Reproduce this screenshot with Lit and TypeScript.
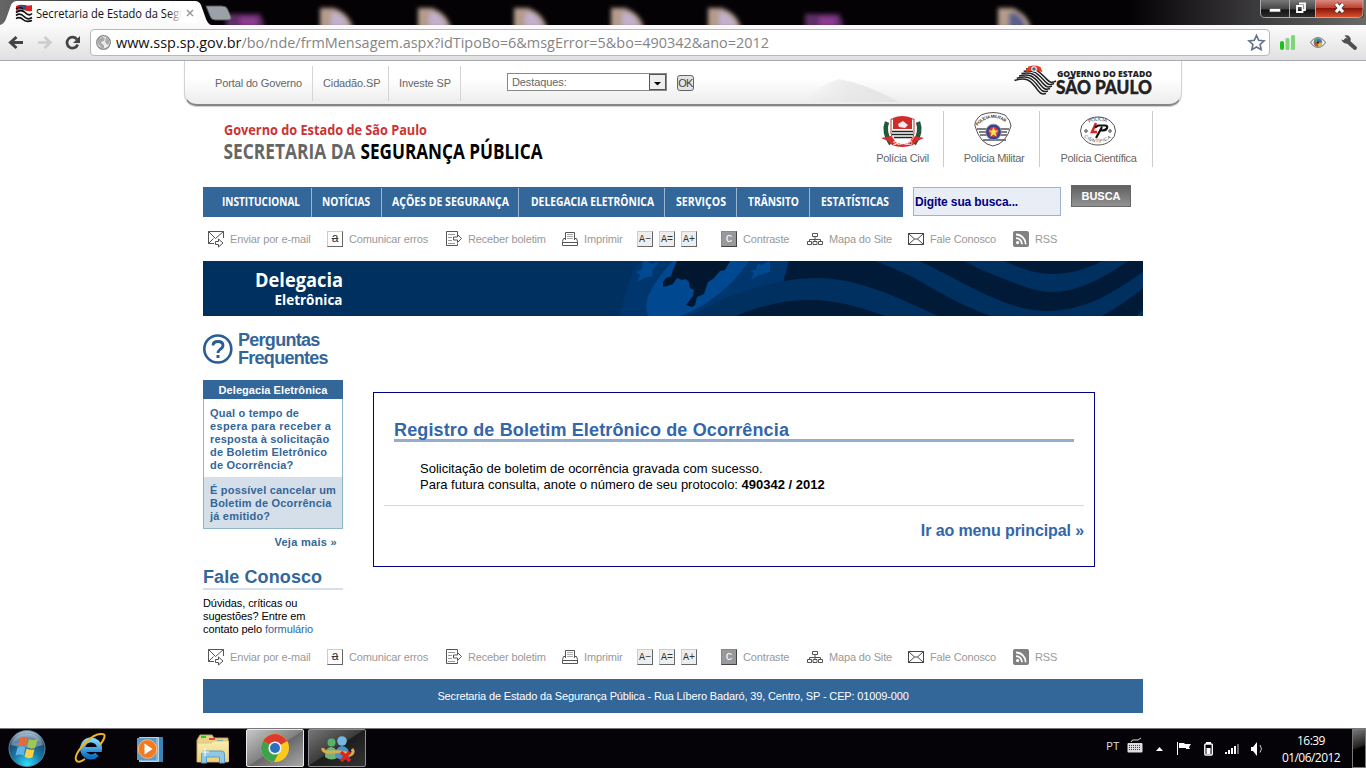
import { LitElement, html, svg, css } from "lit";
import { customElement, property } from "lit/decorators.js";

/** Inline drawing whose viewBox starts at x, y. */
const art = (x: number, y: number, w: number, h: number, body: unknown) =>
  html`<svg width=${w} height=${h} viewBox="${x} ${y} ${w} ${h}">${body}</svg>`;

/** Condensed label set to an exact width. */
const label = (t: string, x: number, y: number, w: number, size: number, fill: string, weight = 700) =>
  svg`<text x=${x} y=${y} textLength=${w} lengthAdjust="spacingAndGlyphs" font-family="'Open Sans','Noto Sans',sans-serif" font-size=${size} font-weight=${weight} fill=${fill}>${t}</text>`;

@customElement("tool-links")
export class ToolLinks extends LitElement {
  static styles = css`
    :host { display: block; height: 18px; padding-left: 5px; }
    .row { display: flex; height: 18px; font: 11px/17px "Liberation Sans", Arial, sans-serif; color: #999; white-space: nowrap; letter-spacing: -0.15px; }
    .item { display: flex; gap: 6px; flex: none; }
    .w119 { width: 119px; } .w116 { width: 116px; } .w75 { width: 75px; } .w22 { width: 22px; }
    .w40 { width: 40px; } .w86 { width: 86px; } .w101 { width: 101px; } .w105 { width: 105px; }
    svg { display: block; flex: none; overflow: visible; }
    .box { box-sizing: border-box; width: 16px; height: 16px; border: 1px solid #ccc; border-right-color: #666; border-bottom-color: #666; background: #eee; color: #333; font: 10px/15px "Liberation Mono", monospace; letter-spacing: 0; text-align: center; }
    .dark { background: #999; border-color: #888; border-right-color: #444; border-bottom-color: #444; color: #fff; font-size: 11px; line-height: 14px; }
    .err { background: #fff; font: 12px/13px "Liberation Sans", sans-serif; text-decoration: line-through; color: #333; }
  `;
  render() {
    return html`<div class="row">
      <span class="item w119">${art(0, 0, 16, 17, svg`<g fill="none" stroke="#555"><path d="M6 12.500H.5V.5h15V7M.5.5l7 7 8-7M.5 12.500l5-5"/><path d="M7.500 10.500h3V8l4.500 4-4.500 4v-2.500h-3z" fill="#fff"/></g>`)}<span>Enviar por e-mail</span></span>
      <span class="item w119"><span class="box err">a</span><span>Comunicar erros</span></span>
      <span class="item w116">${art(0, 0, 16, 16, svg`<g fill="none" stroke="#555"><path d="M11.500 3.500V.5H.5v14h11v-2"/><path d="M2 3.500h7M2 6.500h4M2 9.500h4M2 12.500h7" stroke="#999"/><path d="M7.500 6h4V3.500l4 4-4 4V9h-4z" fill="#fff"/></g>`)}<span>Receber boletim</span></span>
      <span class="item w75">${art(0, 0, 16, 16, svg`<g fill="none" stroke="#555"><path d="M3.500 9V1.500h9V9"/><path d="M5 3.500h6M5 5.500h6M5 7.500h6" stroke="#aaa"/><path d="M3 7.500H1.500l-1 3v4h15v-4l-1-3H13M.5 11.500h15"/></g>`)}<span>Imprimir</span></span>
      <span class="item w22"><span class="box">A−</span></span>
      <span class="item w22"><span class="box">A=</span></span>
      <span class="item w40"><span class="box">A+</span></span>
      <span class="item w86"><span class="box dark">C</span><span>Contraste</span></span>
      <span class="item w101">${art(0, 0, 16, 16, svg`<path d="M5.500 2.500h5v3h-5zM8 6v2.500M2.500 11V8.500h11V11M8 8.500V11M.5 10.500h4v3h-4zM6 10.500h4v3H6zM11.500 10.500h4v3h-4z" fill="none" stroke="#555"/>`)}<span>Mapa do Site</span></span>
      <span class="item w105">${art(0, 0, 16, 16, svg`<path d="M.5 2.500h15v11H.5zl6 5.500h3l6-5.500M.5 13.500l6-5.500M15.500 13.500l-6-5.500" fill="none" stroke="#444"/>`)}<span>Fale Conosco</span></span>
      <span class="item">${art(0, 0, 16, 16, svg`<rect width="16" height="16" rx="2" fill="#808080"/><circle cx="4.600" cy="11.600" r="1.600" fill="#fff"/><path d="M3 7.200a6 6 0 0 1 6 6M3 3.500a9.700 9.700 0 0 1 9.700 9.700" stroke="#fff" stroke-width="1.800" fill="none"/>`)}<span>RSS</span></span>
    </div>`;
  }
}

@customElement("browser-chrome")
export class BrowserChrome extends LitElement {
  static styles = css`
    :host { display: block; height: 61px; }
    svg { display: block; flex: none; }
    .bar { box-sizing: border-box; height: 36px; display: flex; align-items: flex-start; background: linear-gradient(#fbfbfb, #e0e0e0); border-bottom: 1px solid #a8abb3; }
    .nav { width: 90px; }
    .url { box-sizing: border-box; width: 1180px; height: 27px; margin-top: 4px; border: 1px solid #b6b8bc; border-radius: 4px; background: #fff; display: flex; justify-content: space-between; overflow: hidden; }
  `;
  render() {
    const blobs: [number, boolean][] = [[236, true], [330, false], [428, false], [524, false], [621, false], [718, false], [815, true], [1008, false]];
    return html`
      ${art(0, 0, 1366, 25, svg`
        <defs>
          <linearGradient id="tl"><stop offset="0" stop-color="#666"/><stop offset="1" stop-color="#050206"/></linearGradient>
          <linearGradient id="tr"><stop offset="0" stop-color="#050206"/><stop offset="1" stop-color="#6a6a6a"/></linearGradient>
          <linearGradient id="gl" x2="0" y2="1"><stop offset="0" stop-color="#777"/><stop offset=".5" stop-color="#444"/><stop offset=".55" stop-color="#111"/><stop offset="1" stop-color="#333"/></linearGradient>
          <linearGradient id="rd" x2="0" y2="1"><stop offset="0" stop-color="#d98a80"/><stop offset=".45" stop-color="#bb4434"/><stop offset=".5" stop-color="#8e1508"/><stop offset="1" stop-color="#d4512f"/></linearGradient>
          <linearGradient id="tb" x2="0" y2="1"><stop offset="0" stop-color="#fff"/><stop offset="1" stop-color="#fafafa"/></linearGradient>
          <linearGradient id="fade"><stop offset="0" stop-color="#fff" stop-opacity="0"/><stop offset="1" stop-color="#fff"/></linearGradient>
          <filter id="bl" x="-30%" y="-50%" width="160%" height="200%"><feGaussianBlur stdDeviation="2"/></filter>
        </defs>
        <rect width="1366" height="25" fill="#050206"/>
        <rect width="210" height="25" fill="url(#tl)"/>
        <rect x="1130" width="236" height="25" fill="url(#tr)"/>
        ${blobs.map(([x, purple], i) => svg`<g filter="url(#bl)">${purple
          ? svg`<path d="M${x - 10} 14h34q4 6 4 14h-38z" fill="#5e2d66"/><rect x=${x + 4} y="17" width="17" height="10" fill="#8b3a90"/>`
          : svg`<path d="M${x - 10} 8h14q15 5 19 20h-33z" fill="#b39c8c"/><path d="M${x + 1} 13h7q8 5 10 15h-17z" fill=${i === 7 ? "#5a608c" : "#c3b0cc"}/>`}</g>`)}
        <path d="M206 6h16q5 0 6 4l3 7q1 3-2 3h-14q-4 0-5-4z" fill="#9ba1a9" stroke="#555"/>
        <path d="M0 25q4-1 6-6l5-14q2-4 6-4h178q4 0 6 4l5 14q2 5 5 6z" fill="url(#tb)"/>
        <path d="M16 6q4-2 8-1t8 0v6q-4 1-8-1t-8 1z" fill="#d9212b"/><path d="M20 5h6v4h-6z" fill="#35507f"/><path d="M16 9q4-3 7 0" stroke="#111" stroke-width="1.500" fill="none"/>
        <path d="M16 12.500q5-4 9 0t7 1M16 15.500q4-3 8 1t8 1M16 18.500q4-2 7 1t9 1" stroke="#111" stroke-width="1.700" fill="none"/>
        <text x="36" y="17.500" textLength="150" lengthAdjust="spacingAndGlyphs" font-family="'Open Sans','Noto Sans',sans-serif" font-size="12" fill="#111">Secretaria de Estado da Segu</text>
        <rect x="168" y="3" width="14" height="20" fill="url(#fade)"/><rect x="182" y="3" width="15" height="20" fill="#fff"/>
        <path d="M187 10l6 6M193 10l-6 6" stroke="#999" stroke-width="1.500"/>
        <path d="M1260 0v14q0 4 4 4h96q4 0 4-4V0z" fill="url(#gl)"/><path d="M1316 0v17h44q3 0 3-3V0z" fill="url(#rd)"/>
        <path d="M1260.500 0v13q0 4.500 4 4.500h94q4.500 0 4.500-4.500V0M1289.500 0v17M1315.500 0v17" fill="none" stroke="#aaa"/>
        <rect x="1269.500" y="8.500" width="11" height="3.500" fill="#fff" stroke="#444" stroke-width=".7"/>
        <path d="M1299 3.500h6v6.500h-2M1297 6h5.500v6H1297z" fill="none" stroke="#fff" stroke-width="1.800"/>
        <path d="M1336 4l7 8M1343 4l-7 8" stroke="#333" stroke-width="4.600"/><path d="M1336 4l7 8M1343 4l-7 8" stroke="#fff" stroke-width="3"/>`)}
      <div class="bar">
        <div class="nav">${art(0, 25, 90, 35, svg`
          <path d="M23 42.500H12M16.500 37l-6 5.500 6 5.500" fill="none" stroke="#444" stroke-width="3"/>
          <path d="M38 42.500h11M44.500 37l6 5.500-6 5.500" fill="none" stroke="#ccc" stroke-width="2.600"/>
          <path d="M77 39.500a5.500 5.500 0 1 0 .7 5" fill="none" stroke="#444" stroke-width="2.700"/><path d="M80 36v7h-7z" fill="#444"/>`)}</div>
        <div class="url">
          ${art(91, 30, 700, 25, svg`
            <circle cx="103.500" cy="42.500" r="6.800" fill="#eee" stroke="#888" stroke-width="1.300"/>
            <path d="M98 39l4-2 3 1-1 3-3 1 1 2 2 1v3l-2 1-2-3-2-2zM106 37l3 3v4l-2 1-2-3z" fill="#aaa"/>
            <text x="116" y="48" font-family="'Open Sans','Noto Sans',sans-serif" font-size="15" textLength="653" lengthAdjust="spacingAndGlyphs" fill="#111">www.ssp.sp.gov.br<tspan fill="#858585">/bo/nde/frmMensagem.aspx?idTipoBo=6&amp;msgError=5&amp;bo=490342&amp;ano=2012</tspan></text>`)}
          ${art(1241, 30, 28, 25, svg`<path d="M1256.500 35.500l2.200 4.800 5.300.6-3.900 3.600 1 5.200-4.600-2.600-4.600 2.600 1-5.200-3.900-3.600 5.300-.6z" fill="#fff" stroke="#66728d" stroke-width="1.700"/>`)}
        </div>
        ${art(1270, 25, 96, 35, svg`
          <rect x="1280" y="41" width="4" height="9" rx="2" fill="#19c419"/><rect x="1285.500" y="38" width="4" height="12" rx="1.500" fill="#7fd67a"/><rect x="1291" y="35" width="4" height="15" rx="1.500" fill="#7fd67a"/>
          <path d="M1310.500 42.500q7.500-10 15 0-7.500 10-15 0z" fill="#fff" stroke="#888" stroke-width="1.200"/>
          <circle cx="1318" cy="42.500" r="4.300" fill="#3b78ba"/><path d="M1318 42.500v-4.300a4.300 4.300 0 0 0-4.300 4.300z" fill="#4a9e5b"/><path d="M1318 42.500v4.300a4.300 4.300 0 0 0 4.300-4.300z" fill="#e8b62c"/><path d="M1318 42.500v4.300a4.300 4.300 0 0 1-4.300-4.300z" fill="#c9513f"/><circle cx="1318" cy="42.500" r="1.200" fill="#333"/>
          <path d="M1346 40l9 8" stroke="#505050" stroke-width="4" stroke-linecap="round"/><path d="M1344.500 35.500l3 3-1 2.500-5-1.500a5 5 0 0 0 8 3q2.500-3 0-6-2-2-5-1z" fill="#505050"/>`)}
      </div>`;
  }
}

@customElement("task-bar")
export class TaskBar extends LitElement {
  static styles = css`
    :host { display: block; height: 40px; }
    .bar { box-sizing: border-box; height: 40px; display: flex; justify-content: space-between; background: #050307; border-top: 1px solid #77747a; }
    svg { display: block; flex: none; }
    .tray { display: flex; font: 12px/17px "Open Sans", "Noto Sans", sans-serif; color: #fff; }
    .lang { width: 21px; padding-top: 8px; font-size: 11.5px; color: #ddd; }
    .clock { width: 82px; padding-top: 3px; text-align: center; letter-spacing: -0.55px; }
    .desk { box-sizing: border-box; width: 14px; height: 39px; border: 1px solid #777; background: linear-gradient(160deg, #777, #222 45%, #000 50%); }
  `;
  render() {
    return html`<div class="bar">
      ${art(0, 729, 370, 39, svg`
        <defs>
          <radialGradient id="orb" cx=".5" cy=".95" r=".9"><stop offset="0" stop-color="#2fe1ff"/><stop offset=".45" stop-color="#1779a8"/><stop offset=".8" stop-color="#1d4a6e"/><stop offset="1" stop-color="#9fb9cb"/></radialGradient>
          <linearGradient id="c1" x2="1" y2="1"><stop offset="0" stop-color="#c8c8c8"/><stop offset=".5" stop-color="#828282"/><stop offset=".52" stop-color="#686868"/><stop offset="1" stop-color="#aaa"/></linearGradient>
          <linearGradient id="c2" x2="1" y2="1"><stop offset="0" stop-color="#777"/><stop offset=".48" stop-color="#3c3c3c"/><stop offset=".5" stop-color="#1d1d1d"/><stop offset="1" stop-color="#333"/></linearGradient>
          <linearGradient id="ie" x2="0" y2="1"><stop offset="0" stop-color="#7fd6fb"/><stop offset="1" stop-color="#0d6fc4"/></linearGradient>
          <linearGradient id="fo" x2="0" y2="1"><stop offset="0" stop-color="#fbeeb0"/><stop offset="1" stop-color="#ecd07a"/></linearGradient>
        </defs>
        <circle cx="27" cy="748.500" r="18" fill="url(#orb)" stroke="#5c7f97"/>
        <path d="M11 745a16.500 15 0 0 1 32 0q-15 5-32 0z" fill="#fff" opacity=".32"/>
        <path d="M20 738q4-2 8 0l-2 8q-4-2-8 0z" fill="#e8683a"/><path d="M29 739q4 2 9 0l-3 9q-4 2-8-1z" fill="#9cc853"/><path d="M17.500 747.500q4-2 8 0l-2 8q-4-2-8 0z" fill="#63b4e6"/><path d="M26.500 748.500q4 2 8 1l-2 8q-5 2-8-1z" fill="#fbcf46"/>
        <path d="M97 754.500a8.500 8.500 0 1 1 2.500-5H84" fill="none" stroke="url(#ie)" stroke-width="5"/>
        <path d="M100 745q8-11 2-11-7-1-17 9-11 12-9 17 2 4 9-1" fill="none" stroke="#eeb52c" stroke-width="2"/>
        <path d="M142 737h21v25h-21z" fill="#3c82b8"/><path d="M139.500 737.500h19v24h-19z" fill="#84b7da" stroke="#b7d7ec"/><path d="M137 738h19v22h-19z" fill="#5b9bc8"/>
        <circle cx="147.500" cy="749" r="9.300" fill="#f07c22" stroke="#f9b680"/><path d="M144.500 743.500v11l8-5.500z" fill="#fff"/>
        <path d="M200 735h12l2 3h14v24h-31v-22z" fill="#e9d189" stroke="#b9a160"/><path d="M201 736h5v2h-5z" fill="#2c2"/><path d="M209 738h6v2h-6z" fill="#d44"/><path d="M217 740h6v2h-6z" fill="#28c"/>
        <path d="M197.500 743h14l2-2h15v20.500h-31z" fill="url(#fo)" stroke="#dcc680"/>
        <path d="M201.500 763v-9q0-3 3-3h17q3 0 3 3v9h-5v-6h-13v6z" fill="#8ec8e6" stroke="#5c9cc4"/><path d="M205 748v8M201 752h8" stroke="#fff"/>
        <rect x="246.500" y="729.500" width="57" height="37" rx="1.500" fill="url(#c1)" stroke="#e8e8e8"/>
        <circle cx="275" cy="748" r="14" fill="#fcca1c"/><path d="M275 748L262.900 741A14 14 0 0 1 287.100 741z" fill="#db3a2f"/><path d="M275 748l-12.100-7a14 14 0 0 0 11 21l6-11z" fill="#3da24a"/>
        <circle cx="275" cy="748" r="6.600" fill="#f4f4f4"/><circle cx="275" cy="748" r="5" fill="#2c6fbc"/>
        <rect x="308.500" y="729.500" width="57" height="37" rx="1.500" fill="url(#c2)" stroke="#909090"/>
        <circle cx="331.500" cy="742.500" r="4" fill="#58b36a"/><path d="M325 757q0-10 6-10t7 10q-6 5-13 0z" fill="#72b676"/>
        <circle cx="342" cy="741" r="4.800" fill="#76b9e0"/><path d="M335 757q0-11 7-11t8 11q-7 5-15 0z" fill="#4a93c8"/>
        <path d="M323 748q-1 5 10 4t17 3q5-2 2-6" fill="none" stroke="#dcaa55" stroke-width="3"/>
        <path d="M341 752l9 9M350 752l-9 9" stroke="#e2231a" stroke-width="3.600"/>`)}
      <div class="tray">
        <span class="lang">PT</span>
        ${art(1127, 729, 143, 39, svg`
          <path d="M1131 742q1-3 4-2t6-2" fill="none" stroke="#ddd"/><rect x="1127.500" y="743" width="15" height="9.500" rx="1" fill="#ddd"/><path d="M1129 745.500h12M1129 747.500h12M1129 749.500h12" stroke="#444" stroke-dasharray="1 1"/>
          <path d="M1156 751l3.500-4 3.500 4z" fill="#fff"/>
          <path d="M1177.500 742v13" stroke="#fff"/><path d="M1179 743h5.500v1h6.500l-2 3 1 2h-4v-1h-7z" fill="#fff"/>
          <rect x="1204.800" y="744" width="7.500" height="11" rx="1" fill="none" stroke="#fff" stroke-width="1.400"/><path d="M1206.500 748h4v6h-4zM1206 742h5v2h-5z" fill="#fff"/>
          <path d="M1225 752h2v2h-2zM1228 750h2v4h-2zM1231 748h2v6h-2zM1234 746h2v8h-2z" fill="#fff"/><path d="M1237 744h2v10h-2z" fill="#666"/>
          <path d="M1251 747h2l4-5v14l-4-5h-2z" fill="#fff"/><path d="M1260 745q3 4 0 7.500" stroke="#ccc" fill="none"/>`)}
        <div class="clock">16:39<br />01/06/2012</div>
        <div class="desk"></div>
      </div>
    </div>`;
  }
}

@customElement("main-menu")
export class MainMenu extends LitElement {
  @property({ attribute: false }) entries: [string, number, number, number][] = [
    ["INSTITUCIONAL", 203, 222, 78], ["NOTÍCIAS", 312, 322, 48], ["AÇÕES DE SEGURANÇA", 382, 392, 117],
    ["DELEGACIA ELETRÔNICA", 519, 531, 123], ["SERVIÇOS", 665, 676, 50], ["TRÂNSITO", 737, 748, 51], ["ESTATÍSTICAS", 810, 821, 68],
  ];
  static styles = css`
    :host { display: block; width: 700px; height: 30px; background: #336699; }
    .menu { display: flex; }
    svg { display: block; flex: none; overflow: visible; }
  `;
  render() {
    return html`<nav class="menu">${this.entries.map(([t, x, tx, tw], i) => {
      const next = this.entries[i + 1]?.[1] ?? 903;
      return art(x, 187, next - x, 30, svg`${label(t, tx, 206, tw, 12, "#fff")}${next < 903 ? svg`<path d="M${next - 0.5} 188v29" stroke="#9bb6d0"/>` : ""}`);
    })}</nav>`;
  }
}

@customElement("app-root")
export class AppRoot extends LitElement {
  static styles = css`
    :host { display: block; width: 1366px; height: 768px; overflow: hidden; background: #fff; font: 11px/13px "Liberation Sans", Arial, sans-serif; color: #000; }
    .shell { height: 768px; display: grid; grid-template-rows: 61px 667px 40px; }
    svg { display: block; flex: none; overflow: visible; }
    .top { box-sizing: border-box; width: 998px; height: 45px; margin-left: 184px; padding: 5px 28px 0 20px; display: flex; border: 1px solid #d2d2d2; border-top: 0; border-bottom: 2px solid #858585; border-radius: 0 0 13px 13px; background: linear-gradient(#fff 40%, #ececec); box-shadow: 0 1px 1px #ccc; color: #666; }
    .link { box-sizing: border-box; height: 35px; padding: 11px 0 0 10px; border-right: 1px solid #d5d5d5; white-space: nowrap; letter-spacing: -0.13px; }
    .l1 { width: 108px; } .l2 { width: 76px; } .l3 { width: 72px; }
    .select { box-sizing: border-box; width: 160px; height: 18px; margin: 7px 10px 0 46px; border: 1px solid #888; background: #fff; display: flex; justify-content: space-between; padding-left: 4px; line-height: 17px; letter-spacing: -0.1px; }
    .ok { box-sizing: border-box; width: 17px; height: 16px; margin-top: 9px; border: 1px solid #666; border-radius: 3px; background: #e3e3e3; text-align: center; line-height: 15px; letter-spacing: -0.8px; color: #444; }
    .swoosh { margin: 11px 0 0 105px; }
    .sp { margin-left: auto; margin-top: -3px; }
    .page { width: 950px; margin-left: 203px; }
    .brand { height: 81px; display: flex; justify-content: space-between; }
    .police { display: flex; padding-top: 5px; height: 56px; color: #666; text-align: center; letter-spacing: -0.32px; }
    .corp { box-sizing: border-box; border-right: 1px solid #ccc; height: 56px; display: flex; flex-direction: column; align-items: center; gap: 1px; }
    .p1 { width: 82px; } .p2 { width: 96px; padding-left: 5px; } .p3 { width: 113px; padding-left: 5px; }
    .navrow { display: flex; height: 44px; gap: 10px; }
    .search { box-sizing: border-box; width: 148px; height: 29px; border: 1px solid #99b3d0; background: #e9edf6; color: #000080; font-weight: 700; font-size: 12px; line-height: 28px; padding-left: 1px; letter-spacing: -0.12px; }
    .go { box-sizing: border-box; width: 60px; height: 22px; margin-top: -2px; border: 1px solid #666; background: linear-gradient(#606060, #929292); color: #fff; font-weight: 700; line-height: 21px; text-align: center; }
    .banner { margin-top: 12px; height: 55px; }
    .wave { overflow: hidden; }
    .cols { display: flex; gap: 30px; height: 333px; }
    .side { width: 140px; color: #336699; }
    .faq { display: flex; gap: 5px; height: 49px; padding-top: 15px; font: 700 18px/18px "Liberation Sans", Arial, sans-serif; letter-spacing: -0.72px; white-space: nowrap; }
    .q { margin-top: 2px; }
    .head { height: 19px; background: #336699; color: #fff; font-weight: 700; text-align: center; line-height: 20px; letter-spacing: 0.06px; }
    .box { box-sizing: border-box; height: 130px; border: 1px solid #8fb5c9; border-top: 0; font-weight: 700; white-space: nowrap; letter-spacing: 0.2px; }
    .q1 { height: 70px; padding: 8px 6px 0; } .q2 { height: 44px; padding: 7px 6px 0; background: #d5dfea; }
    .wide { letter-spacing: 0.36px; }
    .more { padding: 7px 6px 0 0; text-align: right; font-weight: 700; letter-spacing: 0.3px; }
    .contact { height: 20px; margin-top: 19px; border-bottom: 2px solid #d5dfea; font: 700 18px/18px "Liberation Sans", Arial, sans-serif; letter-spacing: 0.1px; }
    .ask { padding-top: 7px; color: #000; white-space: nowrap; letter-spacing: -0.08px; } .form { color: #336699; }
    .panel { box-sizing: border-box; width: 722px; height: 175px; margin-top: 76px; border: 1px solid #000080; padding: 26px 10px 0; }
    .title { margin: 0 10px; height: 20px; border-bottom: 3px solid #93adcf; font: 700 18px/22px "Liberation Sans", Arial, sans-serif; letter-spacing: 0.135px; color: #3366aa; }
    .msg { height: 44px; padding: 19px 0 0 36px; font-size: 13px; line-height: 16px; border-bottom: 1px solid #d8d8d8; }
    .ln { white-space: nowrap; }
    .back { padding-top: 16px; text-align: right; font: 700 16px/18px "Liberation Sans", Arial, sans-serif; letter-spacing: -0.1px; color: #3366aa; }
    .foot { width: 940px; height: 34px; margin-top: 12px; background: #336699; color: #fff; text-align: center; line-height: 34px; letter-spacing: -0.15px; }
  `;
  render() {
    return html`<div class="shell">
      <browser-chrome></browser-chrome>
      <main>
        <header class="top">
          <span class="link l1">Portal do Governo</span><span class="link l2">Cidadão.SP</span><span class="link l3">Investe SP</span>
          <div class="select"><span>Destaques:</span>${art(0, 0, 17, 16, svg`<rect x=".5" y=".5" width="16" height="15" fill="#eee" stroke="#555"/><path d="M5 8h7l-3.500 3.500z"/>`)}</div>
          <div class="ok">OK</div>
          <div class="swoosh">${art(800, 77, 100, 25, svg`<defs><linearGradient id="sw"><stop offset="0" stop-color="#e4e4e4" stop-opacity="0"/><stop offset=".45" stop-color="#e4e4e4" stop-opacity=".7"/><stop offset="1" stop-color="#e4e4e4"/></linearGradient></defs><path d="M808 102q10-16 32-23 28 5 60 23z" fill="url(#sw)"/>`)}</div>
          <div class="sp">${art(1012, 63, 141, 34, svg`
            ${[0, 1, 2, 3, 4, 5].map((i) => svg`<path d="M${1014.5 + i * 2.3} ${80.5 - i * 2.3}C${1026 + i * 2} ${77 - i * 1.8} ${1030 + i * 1.8} ${80 - i * 1.7} ${1035 + i * 1.8} ${86.5 - i * 2}S${1041 + i * 1.8} ${95 - i * 2.2} ${1046 + i * 2} ${93.5 - i * 2.5}" fill="none" stroke="#222" stroke-width="1.500"/>`)}
            <path d="M1028.500 66.500q6-2 12 0.500l2 5q-8-2-17-.5z" fill="#e33b22"/><circle cx="1034" cy="69" r="2.800" fill="#fff"/><circle cx="1034" cy="69" r="1.800" fill="#3465a8"/>
            ${label("GOVERNO DO ESTADO", 1057, 77, 95, 9, "#222", 800)}
            <text x="1056" y="93.500" textLength="96" lengthAdjust="spacingAndGlyphs" font-family="Lato,sans-serif" font-weight="900" font-size="18" fill="#222" stroke="#222" stroke-width=".4">SÃO PAULO</text>`)}</div>
        </header>
        <div class="page">
          <div class="brand">
            ${art(203, 106, 350, 60, svg`${label("Governo do Estado de São Paulo", 224, 135, 203, 13.5, "#cc3333")}
              ${label("SECRETARIA DA", 223.5, 159, 132, 21, "#666")}${label("SEGURANÇA PÚBLICA", 360.5, 159, 182, 21, "#000")}`)}
            <div class="police">
              <div class="corp p1">${art(882, 111, 44, 40, svg`
                <path d="M888 122q-4 10 4 22M919 122q4 10-4 22" stroke="#1f5a3b" stroke-width="4.500" fill="none"/><path d="M892 119h23v14q-1 10-11.500 13Q893 143 892 133z" fill="#fff" stroke="#b33"/><path d="M894 118q9-4 19 0v11h-19z" fill="#cf2c2c"/><path d="M899 124l5-3 5 4-3 3-6-1z" fill="#f5e9e9"/><path d="M893 131.500h21M893 134.500h21M895 137.500h18" stroke="#222" stroke-width="1.600"/>
                <path d="M882 138l10-2 4 6q8 4 16 0l4-6 9 2-7 3-4 4q-11 4-21 0l-4-4z" fill="#d82b2b"/><text x="894" y="144.500" font-size="5" textLength="19" font-family="Liberation Sans" fill="#fff">SAO PAULO</text>`)}<span>Polícia Civil</span></div>
              <div class="corp p2">${art(975, 110, 40, 40, svg`
                <path d="M976 125q-1-5 6-11 12-5 24 0 6 6 6 11-5 18-18 20-13-2-18-20z" fill="#fff" stroke="#555"/><path d="M978 128h32M980 131h28M981 134h27M984 139h23" stroke="#555" stroke-width="1.600"/>
                <path id="pm" d="M978.500 125q15-17 33 1" fill="none"/><text font-size="4.300" font-weight="700" font-family="Liberation Sans" fill="#333"><textPath href="#pm">POLÍCIA MILITAR</textPath></text>
                <circle cx="994.500" cy="131" r="7.800" fill="#34409d" stroke="#999"/><circle cx="994.500" cy="131" r="5" fill="#d43b33"/><path d="M994.500 126l1.500 3.500h3.500l-3 2.400 1.200 4-3.200-2.400-3.200 2.400 1.200-4-3-2.400h3.500z" fill="#f6dd5b"/>`)}<span>Polícia Militar</span></div>
              <div class="corp p3">${art(1080, 111, 40, 40, svg`
                <ellipse cx="1099" cy="131" rx="17.500" ry="14" fill="#fff" stroke="#555"/>
                <path id="pc" d="M1086 126q13-11 26 0" fill="none"/><path id="pd" d="M1085 137q14 11 28 0" fill="none"/><text font-size="5" font-family="Liberation Sans" fill="#333"><textPath href="#pc" startOffset="5">POLÍCIA</textPath></text><text font-size="4.500" font-family="Liberation Sans" fill="#333"><textPath href="#pd" textLength="29">CIENTÍFICA</textPath></text>
                <path d="M1097 123l-4 9h5" fill="none" stroke="#dc2222" stroke-width="2.500"/><path d="M1096 127.500l3-2h7q3 0 2 2.500t-5 2.500h-2M1103 127l-6 11" fill="none" stroke="#111" stroke-width="2.200"/><path d="M1085 131h4M1087 129v4M1109 131h4M1111 129v4" stroke="#777" stroke-width="1.500"/>`)}<span>Polícia Científica</span></div>
            </div>
          </div>
          <div class="navrow"><main-menu></main-menu><div class="search">Digite sua busca...</div><div class="go">BUSCA</div></div>
          <tool-links></tool-links>
          <div class="banner"><svg class="wave" width="940" height="55" viewBox="203 261 940 55">
            <rect x="203" y="261" width="940" height="55" fill="#003060"/>
            <path d="M619.500 316Q626 290 633 271l8-10h148l-5 20q-50 9-93 35z" fill="#00366e"/>
            <path d="M648 316q-4-9 1-22 9-18 24-33h76q-10 14-19 23-20 20-49 32z" fill="#004890"/>
            <path d="M643 261l-1 8-6 3 4 3-3 7 7-4 9-2-1-5 7-9-8 2-3-3zM757 266l-1 3-6 2 4 2-3 7 8-5 11-3V261l-9 4-3-2z" fill="#004890"/>
            <path d="M677 261l-4 9-2 6-5 2-3 4v5l4-1 6-2 4-6 5 2 4-1 3 3 1 6 4 2-1 6-7 9 6 2 3-2 2-8 7-3 4-12 5-3 7-8 5-1 5-9z" fill="#00172f"/>
            <path d="M789 261h86c19 7 35 14 48 22 24 14 47 26 68 33h-53c-37-17-78-38-122-38q-16 0-32.500 3z" fill="#001a38"/>
            <path d="M736 316c22-9 46-16 74-16s53 8 75 16z" fill="#001a38"/>
            <path d="M919 261h45c17 9 34 16 51 22 13 5 25 9 37 9 25 0 50-13 76-31h15v11c-18 12-35 24-54 31-28 10-50 10-74 3-35-11-64-31-96-45z" fill="#001a38"/>
            <path d="M1004 261c18 8 32 13 48 13s33-4 50-13zM1102 316q22-12 41-28v22l-7 6z" fill="#001a38"/>
            ${label("Delegacia", 255, 287, 88, 20, "#fff")}${label("Eletrônica", 274.5, 304.5, 68, 15, "#fff")}</svg></div>
          <div class="cols">
            <aside class="side">
              <div class="faq"><span class="q">${art(203, 333, 30, 31, svg`<circle cx="217.800" cy="349" r="13.500" fill="none" stroke="#295d94" stroke-width="2.600"/><path d="M213 345.500q0-4 5-4t5 4q0 2-3 4-2 1.500-2 3.500" fill="none" stroke="#295d94" stroke-width="2.800"/><path d="M216.500 355h3v3h-3z" fill="#295d94"/>`)}</span><span>Perguntas<br />Frequentes</span></div>
              <div class="head">Delegacia Eletrônica</div>
              <div class="box"><div class="q1">Qual o tempo de<br /><span class="wide">espera para receber a</span><br />resposta à solicitação<br />de Boletim Eletrônico<br />de Ocorrência?</div><div class="q2">É possível cancelar um<br />Boletim de Ocorrência<br />já emitido?</div></div>
              <div class="more">Veja mais »</div>
              <div class="contact">Fale Conosco</div>
              <div class="ask">Dúvidas, críticas ou<br />sugestões? Entre em<br />contato pelo <span class="form">formulário</span></div>
            </aside>
            <section class="panel">
              <div class="title">Registro de Boletim Eletrônico de Ocorrência</div>
              <div class="msg"><div class="ln">Solicitação de boletim de ocorrência gravada com sucesso.</div><div class="ln">Para futura consulta, anote o número de seu protocolo: <b>490342 / 2012</b></div></div>
              <div class="back">Ir ao menu principal »</div>
            </section>
          </div>
          <tool-links></tool-links>
          <footer class="foot">Secretaria de Estado da Segurança Pública - Rua Líbero Badaró, 39, Centro, SP - CEP: 01009-000</footer>
        </div>
      </main>
      <task-bar></task-bar>
    </div>`;
  }
}
